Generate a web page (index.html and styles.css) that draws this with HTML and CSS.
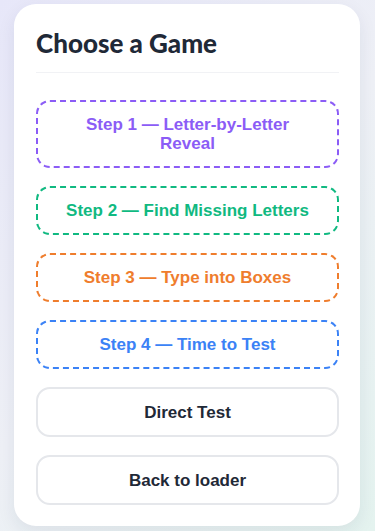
FILE: index.html
```html
<!DOCTYPE html>
<html lang="en">
<head>
    <meta charset="UTF-8">
    <meta name="viewport" content="width=device-width, initial-scale=1.0">
    <title>Choose a Game</title>
    <link rel="stylesheet" href="styles.css">
</head>
<body>
    <div class="card">
        <h1>Choose a Game</h1>

        <div class="menu">
            <button class="game-btn step-1">Step 1 — Letter-by-Letter Reveal</button>
            <button class="game-btn step-2">Step 2 — Find Missing Letters</button>
            <button class="game-btn step-3">Step 3 — Type into Boxes</button>
            <button class="game-btn step-4">Step 4 — Time to Test</button>
            <button class="game-btn plain">Direct Test</button>
            <button class="game-btn plain">Back to loader</button>
        </div>
    </div>
</body>
</html>
```

FILE: styles.css
```css
:root {
    --text-color: #1f2937;
    --purple: #8b5cf6;
    --green: #10b981;
    --orange: #ef7d2d;
    --blue: #3b82f6;
}

body {
    margin: 0;
    padding: 4px 15px 6px 14px;
    min-height: 100vh;
    box-sizing: border-box;
    background: linear-gradient(135deg, #e7e7f9 0%, #eef0f6 50%, #e4f3ef 100%);
    font-family: 'Liberation Sans', Arial, sans-serif;
    color: var(--text-color);
}

.card {
    background: #fff;
    border-radius: 22px;
    padding: 24px 21px 21px 22px;
    box-shadow: 0 6px 18px rgba(30, 41, 80, 0.08);
}

h1 {
    font-family: 'Lato', 'Inter', sans-serif;
    font-weight: 900;
    font-size: 26px;
    line-height: 30px;
    margin: 0 0 27px 0;
    padding-bottom: 14px;
    border-bottom: 1px solid #f1f2f5;
    color: var(--text-color);
}

.menu {
    display: flex;
    flex-direction: column;
    gap: 18px;
}

.game-btn {
    font-family: 'Liberation Sans', Arial, sans-serif;
    font-weight: bold;
    font-size: 17px;
    line-height: 19px;
    padding: 13px 24px;
    background: #fff;
    border-radius: 14px;
    text-align: center;
    cursor: pointer;
}

.step-1 { color: var(--purple); border: 2px dashed var(--purple); }
.step-2 { color: var(--green); border: 2px dashed var(--green); }
.step-3 { color: var(--orange); border: 2px dashed var(--orange); }
.step-4 { color: var(--blue); border: 2px dashed var(--blue); }

.plain {
    color: var(--text-color);
    border: 2px solid #e5e7eb;
    padding: 13.5px 24px;
}
```
